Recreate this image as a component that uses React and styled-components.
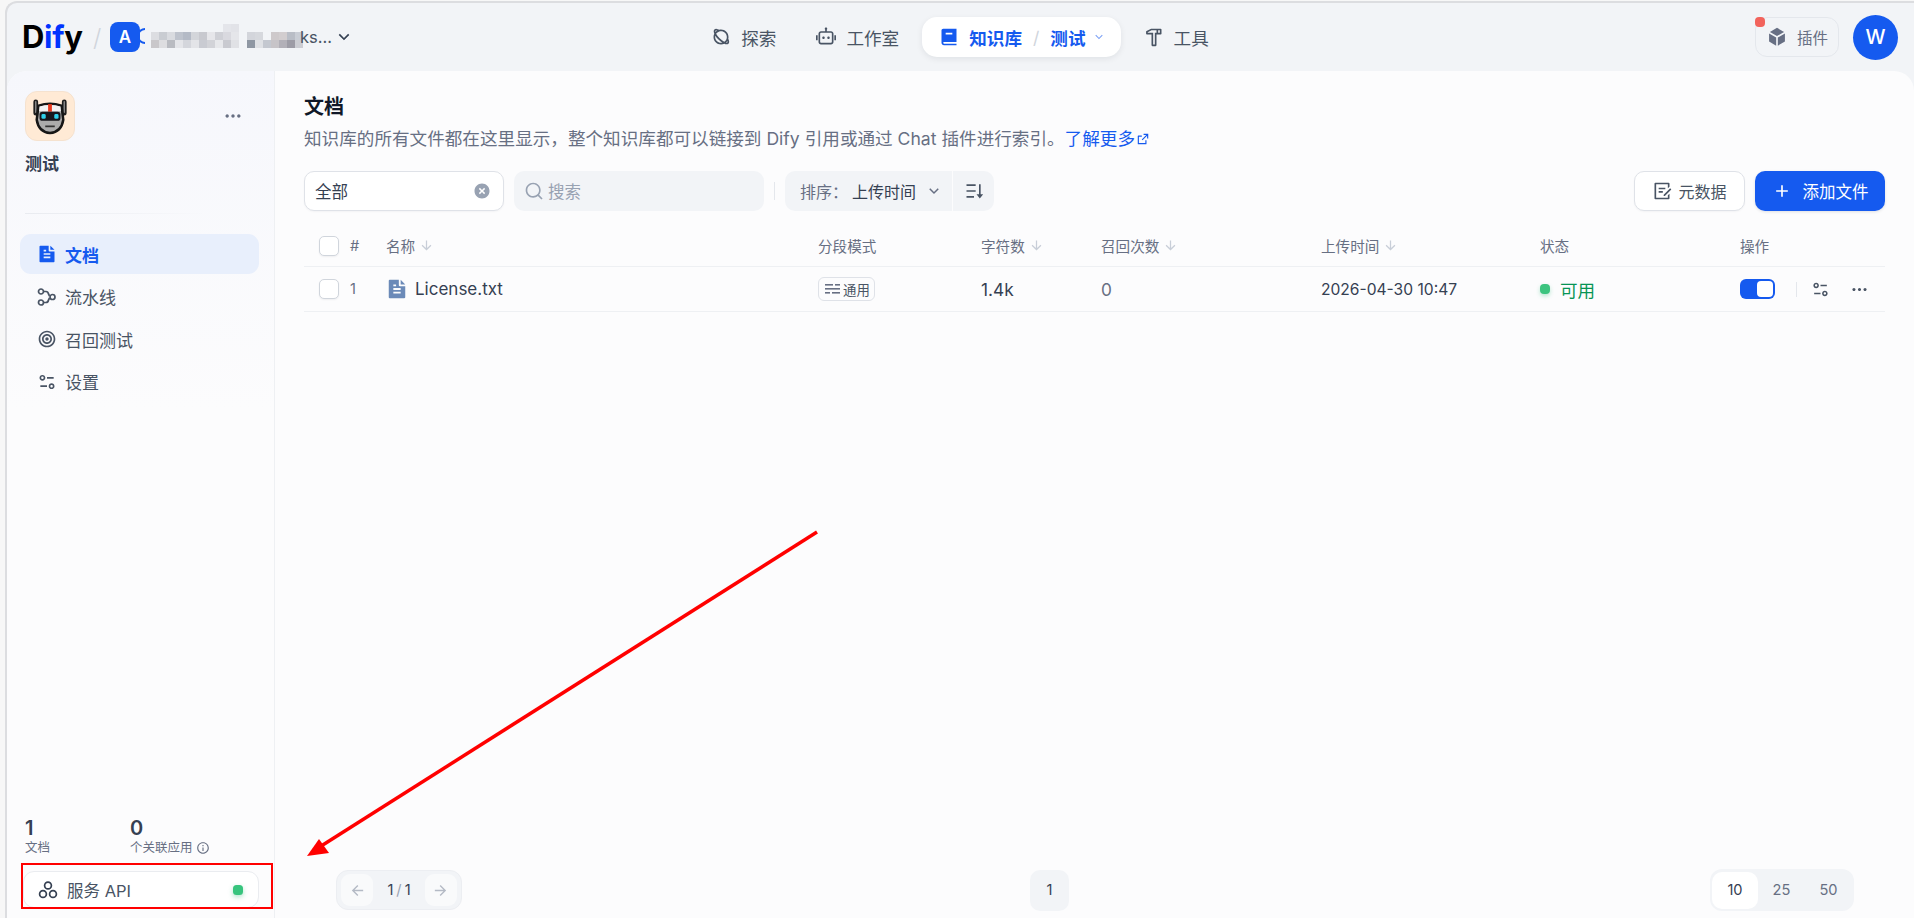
import React from "react";
import styled, { createGlobalStyle } from "styled-components";
import {
  RiPlanetLine, RiRobot2Line, RiBook2Fill, RiHammerLine, RiBox3Fill, RiFileTextFill,
  RiFocus2Line, RiEqualizer2Line, RiMoreFill, RiSearchLine, RiArrowDownSLine, RiArrowDownLine,
  RiCloseCircleFill, RiAddLine, RiExternalLinkLine, RiInformationLine, RiArrowLeftLine,
  RiArrowRightLine, RiDraftLine, RiSortDesc,
} from "react-icons/ri";

const Global = createGlobalStyle`
  html, body { margin: 0; padding: 0; width: 1914px; height: 918px; overflow: hidden; background: #f7f7f7; }
  body, button, input { font-family: Inter, "Noto Sans CJK SC", sans-serif; }
  * { box-sizing: border-box; }
`;

const Page = styled.div`position: relative; width: 1914px; height: 918px; padding: 1px 0 0 5px;`;
const Frame = styled.div`
  height: 917px; display: flex; flex-direction: column; background: #f2f4f7;
  border-top: 2px solid #dcdde0; border-left: 2px solid #dcdde0; border-top-left-radius: 12px; overflow: hidden;
`;
const Header = styled.header`
  flex: 0 0 68px; display: grid; grid-template-columns: 1fr auto 1fr; align-items: center;
  padding: 0 16px 0 15px;
`;
const HeaderLeft = styled.div`display: flex; align-items: center;`;
const Logo = styled.div`font-size: 31px; font-weight: 700; letter-spacing: -0.3px; color: #000; line-height: 30px; width: 65px;`;
const LogoBlue = styled.span`color: #0033ff;`;
const Slash = styled.span`color: #d0d5dc; font-size: 24px; font-weight: 300; margin: 0 8px 0 6px; width: 9px;`;
const WorkspaceBadge = styled.div`
  width: 30px; height: 30px; border-radius: 8px; background: #155aef; color: #fff; font-size: 17px; font-weight: 600;
  display: flex; align-items: center; justify-content: center;
`;
const Mosaic = styled.svg`display: block; width: 164px; height: 26px; margin-top: -2px;`;
const WorkspaceTail = styled.span`font-size: 16.5px; color: #495464; margin-right: 2px; margin-left: -4px;`;

const Nav = styled.nav`display: flex; align-items: center; gap: 6px;`;
const NavItem = styled.div`
  height: 40px; display: flex; align-items: center; gap: 10px; padding: 0 17px; font-size: 17.6px; color: #495464;
  font-weight: ${(p) => (p.$active ? 600 : 400)};
  svg { font-size: 20px; color: #495464; }
  ${(p) => p.$active && `
    background: #fff; color: #155aef; border-radius: 15px; box-shadow: 0 2px 6px rgba(16,24,40,.08); padding: 0 15px 0 17px;
    svg { color: #155aef; }
  `}
`;
const NavSep = styled.span`color: #d0d5dc; font-weight: 400; margin: 0 1px;`;
const NavChevron = styled.span`display: flex; margin-left: -4px; font-size: 14px; svg { font-size: 14px; color: #7fa3f5; }`;
const HeaderRight = styled.div`display: flex; justify-content: flex-end; align-items: center; gap: 14px;`;
const PluginButton = styled.div`
  position: relative; width: 84px; height: 40px; border: 1.5px solid #e4e7ec; border-radius: 12px; display: flex; align-items: center;
  gap: 10px; padding-left: 11px; font-size: 15.5px; color: #676f83;
  svg { font-size: 20px; color: #676f83; }
`;
const PluginDot = styled.span`
  position: absolute; left: -1px; top: -1px; width: 10px; height: 10px; border-radius: 4px; background: #f2635c;
`;
const Avatar = styled.div`
  width: 45px; height: 45px; border-radius: 50%; background: #155aef; color: #fff; font-size: 20px; font-weight: 500;
  display: flex; align-items: center; justify-content: center;
`;

const Main = styled.main`flex: 1; min-height: 0; display: flex; background: #fcfcfd; border-radius: 20px 20px 0 0;`;
const Sidebar = styled.aside`
  width: 268px; flex: none; display: flex; flex-direction: column; border-right: 1px solid #eef0f3;
  background: linear-gradient(180deg, #f6f7fc 0%, #fcfcfd 40%); border-top-left-radius: 20px;
`;
const SideHead = styled.div`padding: 20px 17px 0 18px;`;
const SideTop = styled.div`display: flex; justify-content: space-between; align-items: center;`;
const DatasetIcon = styled.div`
  width: 50px; height: 50px; border-radius: 12px; background: #ffead5; border: 1px solid #f5e2cf;
  display: flex; align-items: center; justify-content: center;
`;
const MoreIcon = styled.span`
  display: flex; color: #676f83; font-size: 20px; margin-right: 14px;
`;
const DatasetName = styled.div`font-size: 17px; font-weight: 600; color: #354052; margin-top: 11px; line-height: 24px;`;
const Rule = styled.div`height: 1px; margin: 37px 50px 0 0; background: linear-gradient(90deg, #e9ebf0, #e9ebf000);`;
const SideNav = styled.div`display: flex; flex-direction: column; gap: 2.5px; padding: 20px 15px 0 13px;`;
const SideItem = styled.div`
  height: 40px; display: flex; align-items: center; gap: 8px; padding-left: 17px; border-radius: 11px; font-size: 17px;
  color: ${(p) => (p.$active ? "#155aef" : "#495464")}; font-weight: ${(p) => (p.$active ? 600 : 400)};
  background: ${(p) => (p.$active ? "#e8effc" : "transparent")};
  svg { font-size: 20px; flex: none; }
`;
const SideBottom = styled.div`margin-top: auto; padding: 0 15px 10px 16px;`;
const Stats = styled.div`display: flex; padding-left: 2px;`;
const Stat = styled.div`width: 105px; flex: none;`;
const StatValue = styled.div`font-size: 20px; font-weight: 600; color: #354052; line-height: 22px;`;
const StatLabel = styled.div`display: flex; align-items: center; gap: 3px; font-size: 12.5px; color: #676f83; line-height: 18px; white-space: nowrap; svg { font-size: 14px; }`;
const ApiBox = styled.div`
  height: 37px; margin-top: 14px; display: flex; align-items: center; gap: 9px; padding: 0 15px 0 14px; border: 1px solid #eaecf0; border-radius: 11px;
  font-size: 16.5px; color: #495464; background: #fff;
`;
const GreenDot = styled.span`
  width: 10px; height: 10px; border-radius: 3.5px; background: #37c47d; box-shadow: 0 2px 5px rgba(23,178,106,.35); margin-left: auto;
`;

const Content = styled.section`flex: 1; min-width: 0; display: flex; flex-direction: column; padding: 24px 29px 7px 29px;`;
const Title = styled.h1`margin: 0; font-size: 20px; line-height: 25px; font-weight: 600; color: #101828;`;
const Desc = styled.p`margin: 7px 0 0; font-size: 17.6px; line-height: 24px; color: #676f83; display: flex; align-items: center; white-space: nowrap;`;
const DocLink = styled.a`color: #155aef; display: inline-flex; align-items: center; svg { font-size: 14px; margin-left: 1px; }`;
const FilterRow = styled.div`display: flex; align-items: center; margin-top: 20px; height: 40px;`;
const SelectBox = styled.div`
  width: 200px; height: 40px; background: #fff; border: 1.5px solid #dfe2e8; border-radius: 10px; display: flex; align-items: center; justify-content: space-between;
  padding: 0 12px 0 10px; font-size: 16.5px; color: #354052; box-shadow: 0 1px 2px rgba(16,24,40,.04); svg { font-size: 18px; color: #98a2b2; }
`;
const SearchBox = styled.div`
  width: 250px; height: 40px; margin-left: 10px; background: #f2f4f7; border-radius: 10px; display: flex; align-items: center; gap: 4px; padding-left: 10px; font-size: 16.5px; color: #98a2b2;
  svg { font-size: 20px; }
`;
const VSep = styled.span`width: 1px; height: 18px; background: #e4e7ec; margin: 0 10px;`;
const SortBox = styled.div`
  width: 167px; height: 40px; background: #f2f4f7; border-radius: 10px 0 0 10px; display: flex; align-items: center; padding-left: 15px; font-size: 16px; color: #354052; white-space: nowrap;
  svg { font-size: 18px; color: #676f83; margin-left: 9px; flex: none; }
`;
const SortLabel = styled.span`color: #676f83; margin-right: 4px;`;
const SortToggle = styled.div`
  width: 41px; height: 40px; margin-left: 1px; background: #f2f4f7; border-radius: 0 10px 10px 0; display: flex; align-items: center; justify-content: center; font-size: 20px; color: #495464;
`;
const RightActions = styled.div`margin-left: auto; display: flex; gap: 10px;`;
const GhostButton = styled.div`
  width: 111px; height: 40px; background: #fff; border: 1.5px solid #dfe2e8; border-radius: 10px; display: flex; align-items: center; justify-content: center; gap: 6px; font-size: 16px; color: #495464;
  box-shadow: 0 1px 2px rgba(16,24,40,.04); svg { font-size: 20px; color: #495464; }
`;
const PrimaryButton = styled.div`
  width: 130px; height: 40px; background: #155aef; border-radius: 10px; display: flex; align-items: center; justify-content: center; gap: 11px; font-size: 16.5px; color: #fff;
  box-shadow: 0 1px 3px rgba(16,24,40,.12); svg { font-size: 20px; }
`;

const columns = "46px 36px 432px 163px 120px 220px 219px 200px 144px";
const HeadRow = styled.div`
  display: grid; grid-template-columns: ${columns}; align-items: center; height: 42px; margin-top: 14px;
  border-bottom: 1.5px solid #eef0f3; font-size: 14.6px; color: #676f83;
`;
const BodyRow = styled.div`
  display: grid; grid-template-columns: ${columns}; align-items: center; height: 45px; border-bottom: 1.5px solid #eef0f3; font-size: 17.3px; color: #354052;
`;
const CheckCell = styled.div`padding-left: 15px;`;
const Checkbox = styled.span`display: block; width: 20px; height: 20px; background: #fff; border: 1.5px solid #d0d5dc; border-radius: 5px; box-shadow: 0 1px 2px rgba(16,24,40,.06);`;
const HeadCell = styled.div`display: flex; align-items: center; gap: 4px; svg { font-size: 15px; color: #c8ced8; }`;
const IndexCell = styled.div`font-size: 14.6px; color: #676f83;`;
const NameCell = styled.div`display: flex; align-items: center; gap: 7px; font-size: 17px; svg { font-size: 22px; color: #6b8ab8; flex: none; }`;
const ModeTag = styled.span`
  display: inline-flex; align-items: center; gap: 3px; height: 24px; width: 57px; padding-left: 6px; border: 1.5px solid #dfe2e8; border-radius: 6px; font-size: 13.4px; color: #495464;
`;
const GrayCount = styled.div`color: #676f83;`;
const DateCell = styled.div`font-size: 15.6px;`;
const Status = styled.div`display: flex; align-items: center; gap: 10px; color: #079455; font-size: 17.6px;`;
const StatusDot = styled.span`width: 10px; height: 10px; border-radius: 4px; background: #3cc47f; box-shadow: 0 2px 4px rgba(23,178,106,.3);`;
const Actions = styled.div`display: flex; align-items: center; color: #354052;`;
const Toggle = styled.span`position: relative; flex: none; display: block; width: 35px; height: 20px; border-radius: 6px; background: #155aef;`;
const ToggleKnob = styled.span`position: absolute; right: 2px; top: 2px; width: 16px; height: 16px; border-radius: 4px; background: #fff;`;
const ActionSep = styled.span`flex: none; width: 1px; height: 15px; background: #e4e7ec; margin: 0 14px 0 21px;`;
const ActionIcon = styled.span`display: flex; flex: none; font-size: 19px; margin-right: 20px; color: #495464;`;

const Pager = styled.div`margin-top: auto; display: flex; align-items: center; padding: 0 31px 0 32px; height: 42px;`;
const PrevNext = styled.div`
  width: 126px; height: 40px; background: #f2f4f7; border: 1px solid #eceef2; border-radius: 12px; display: flex; align-items: center; justify-content: space-between; padding: 0 4px; font-size: 14.6px; color: #354052;
`;
const PagerButton = styled.span`
  width: 32px; height: 32px; background: #f9fafb; border-radius: 9px; display: flex; align-items: center; justify-content: center; font-size: 17px; color: #b4bac5;
`;
const PagerSlash = styled.span`color: #98a2b2; margin: 0 3px;`;
const PageNumber = styled.div`
  margin-left: 568px; width: 39px; height: 41px; background: #f2f4f7; border-radius: 10px; display: flex; align-items: center; justify-content: center; font-size: 14.6px; color: #354052;
`;
const PageSizes = styled.div`margin-left: auto; width: 144px; height: 42px; background: #f2f4f7; border-radius: 12px; display: flex; align-items: center; padding: 3px 2px; font-size: 14.6px; color: #676f83;`;
const SizeOption = styled.span`
  height: 37px; width: ${(p) => (p.$active ? 46 : 47)}px; display: flex; align-items: center; justify-content: center; border-radius: 10px;
  ${(p) => p.$active && "background: #fff; color: #354052;"}
`;

const RedBox = styled.div`position: absolute; left: 21px; top: 863px; width: 252px; height: 46px; border: 2px solid #f00; pointer-events: none;`;
const ArrowLayer = styled.svg`position: absolute; left: 0; top: 0; pointer-events: none;`;

const mosaicRows = [
  ["", "", "", "", "", "", "", "", "", "e4e5ea", "e2e3e8", "", "", "", "", "", "", "", "", ""],
  ["dcdde1", "c9ccd2", "d9dbe0", "bec3cd", "b4bac6", "d3d5da", "c8c9cf", "e6e6ea", "cfd0d6", "d9d9df", "e5e6ea", "", "d3d5db", "d6d8dd", "", "cec9cb", "d2cdcf", "b9bdc6", "c9cdd5", "e6e8ec"],
  ["c9c7ca", "dddde0", "b9bbc1", "e4e5e9", "d4d6dc", "e3e4e8", "c9cbd2", "d2d3d8", "e7e8eb", "c9cad0", "e0e1e5", "", "8f97a3", "dfe1e5", "c4c8d0", "c7c4c8", "b2b0b8", "9d9ca6", "cccdd3", ""],
];

const Redaction = () => (
  <Mosaic viewBox="0 0 164 26">
    <path d="M5 6 A7 7 0 0 0 5 20" fill="none" stroke="#155aef" strokeWidth="2" />
    {mosaicRows.map((row, r) =>
      row.map((c, i) => (c ? <rect key={`${r}-${i}`} x={11 + i * 8} y={1 + r * 8} width="8" height="8" fill={`#${c}`} /> : null))
    )}
  </Mosaic>
);

const Robot = () => (
  <svg width="38" height="38" viewBox="0 0 40 40">
    <path d="M5 5 L5 17 M35 5 L35 17" stroke="#1f1f1f" strokeWidth="5" strokeLinecap="round" />
    <path d="M5 5 L5 16 M35 5 L35 16" stroke="#8a8a8a" strokeWidth="1.5" strokeLinecap="round" />
    <path d="M8 9 Q20 5 32 9 L34 24 Q32 37 20 38 Q8 37 6 24 Z" fill="#ababab" stroke="#161616" strokeWidth="2.6" />
    <path d="M9 10 Q20 7 31 10 L31.5 15 L8.5 15 Z" fill="#f3f3f3" />
    <rect x="18" y="7.5" width="4" height="8" fill="#e8391d" />
    <rect x="9" y="15.5" width="22" height="9.5" rx="3" fill="#17171d" />
    <rect x="11" y="18" width="4.5" height="5" rx="1.5" fill="#2fd0ea" />
    <rect x="24.5" y="18" width="4.5" height="5" rx="1.5" fill="#2fd0ea" />
    <rect x="15" y="30" width="10" height="1.8" fill="#333" />
  </svg>
);

const PipelineIcon = () => (
  <svg width="20" height="20" viewBox="0 0 20 20" fill="none" stroke="#495464" strokeWidth="1.7">
    <circle cx="4" cy="4.5" r="2.5" />
    <circle cx="4" cy="15.5" r="2.5" />
    <circle cx="15.5" cy="10" r="2.5" />
    <path d="M6.5 4.5 H9 Q11 4.5 11.5 7 L12.5 9 M6.5 15.5 H9 Q11 15.5 11.5 13 L12.5 11" />
  </svg>
);

const ApiIcon = () => (
  <svg width="20" height="20" viewBox="0 0 20 20" fill="none" stroke="#354052" strokeWidth="1.7">
    <circle cx="10" cy="5.5" r="3.4" />
    <circle cx="5" cy="14" r="3.4" />
    <circle cx="15" cy="14" r="3.4" />
  </svg>
);

const ChunkIcon = () => (
  <svg width="15" height="12" viewBox="0 0 15 12" fill="#676f83">
    <rect x="0" y="1" width="8" height="1.6" />
    <rect x="10" y="1" width="5" height="1.6" />
    <rect x="0" y="5" width="15" height="1.6" />
    <rect x="0" y="9" width="5" height="1.6" />
    <rect x="7" y="9" width="8" height="1.6" />
  </svg>
);

const Head = ({ label, sortable }) => (
  <HeadCell>
    {label}
    {sortable && <RiArrowDownLine />}
  </HeadCell>
);

export default function App() {
  return (
    <Page>
      <Global />
      <Frame>
        <Header>
          <HeaderLeft>
            <Logo>D<LogoBlue>if</LogoBlue>y</Logo>
            <Slash>/</Slash>
            <WorkspaceBadge>A</WorkspaceBadge>
            <Redaction />
            <WorkspaceTail>ks...</WorkspaceTail>
            <RiArrowDownSLine size={20} color="#354052" />
          </HeaderLeft>
          <Nav>
            <NavItem><RiPlanetLine />探索</NavItem>
            <NavItem><RiRobot2Line />工作室</NavItem>
            <NavItem $active><RiBook2Fill />知识库<NavSep>/</NavSep>测试<NavChevron><RiArrowDownSLine /></NavChevron></NavItem>
            <NavItem><RiHammerLine />工具</NavItem>
          </Nav>
          <HeaderRight>
            <PluginButton><PluginDot /><RiBox3Fill />插件</PluginButton>
            <Avatar>W</Avatar>
          </HeaderRight>
        </Header>
        <Main>
          <Sidebar>
            <SideHead>
              <SideTop>
                <DatasetIcon><Robot /></DatasetIcon>
                <MoreIcon><RiMoreFill /></MoreIcon>
              </SideTop>
              <DatasetName>测试</DatasetName>
              <Rule />
            </SideHead>
            <SideNav>
              <SideItem $active><RiFileTextFill />文档</SideItem>
              <SideItem><PipelineIcon />流水线</SideItem>
              <SideItem><RiFocus2Line />召回测试</SideItem>
              <SideItem><RiEqualizer2Line />设置</SideItem>
            </SideNav>
            <SideBottom>
              <Stats>
                <Stat><StatValue>1</StatValue><StatLabel>文档</StatLabel></Stat>
                <Stat><StatValue>0</StatValue><StatLabel>个关联应用<RiInformationLine /></StatLabel></Stat>
              </Stats>
              <ApiBox><ApiIcon />服务 API<GreenDot /></ApiBox>
            </SideBottom>
          </Sidebar>
          <Content>
            <Title>文档</Title>
            <Desc>知识库的所有文件都在这里显示，整个知识库都可以链接到 Dify 引用或通过 Chat 插件进行索引。<DocLink>了解更多<RiExternalLinkLine /></DocLink></Desc>
            <FilterRow>
              <SelectBox>全部<RiCloseCircleFill /></SelectBox>
              <SearchBox><RiSearchLine />搜索</SearchBox>
              <VSep />
              <SortBox><SortLabel>排序：</SortLabel>上传时间<RiArrowDownSLine /></SortBox>
              <SortToggle><RiSortDesc /></SortToggle>
              <RightActions>
                <GhostButton><RiDraftLine />元数据</GhostButton>
                <PrimaryButton><RiAddLine />添加文件</PrimaryButton>
              </RightActions>
            </FilterRow>
            <HeadRow>
              <CheckCell><Checkbox /></CheckCell>
              <Head label="#" />
              <Head label="名称" sortable />
              <Head label="分段模式" />
              <Head label="字符数" sortable />
              <Head label="召回次数" sortable />
              <Head label="上传时间" sortable />
              <Head label="状态" />
              <Head label="操作" />
            </HeadRow>
            <BodyRow>
              <CheckCell><Checkbox /></CheckCell>
              <IndexCell>1</IndexCell>
              <NameCell><RiFileTextFill />License.txt</NameCell>
              <div><ModeTag><ChunkIcon />通用</ModeTag></div>
              <div>1.4k</div>
              <GrayCount>0</GrayCount>
              <DateCell>2026-04-30 10:47</DateCell>
              <Status><StatusDot />可用</Status>
              <Actions>
                <Toggle><ToggleKnob /></Toggle>
                <ActionSep />
                <ActionIcon><RiEqualizer2Line /></ActionIcon>
                <ActionIcon><RiMoreFill /></ActionIcon>
              </Actions>
            </BodyRow>
            <Pager>
              <PrevNext>
                <PagerButton><RiArrowLeftLine /></PagerButton>
                <span>1<PagerSlash>/</PagerSlash>1</span>
                <PagerButton><RiArrowRightLine /></PagerButton>
              </PrevNext>
              <PageNumber>1</PageNumber>
              <PageSizes>
                <SizeOption $active>10</SizeOption>
                <SizeOption>25</SizeOption>
                <SizeOption>50</SizeOption>
              </PageSizes>
            </Pager>
          </Content>
        </Main>
      </Frame>
      <RedBox />
      <ArrowLayer width="1914" height="918">
        <line x1="817" y1="532" x2="318" y2="848" stroke="#f00" strokeWidth="3.5" />
        <polygon points="307,856 319,839 329,853" fill="#f00" />
      </ArrowLayer>
    </Page>
  );
}
